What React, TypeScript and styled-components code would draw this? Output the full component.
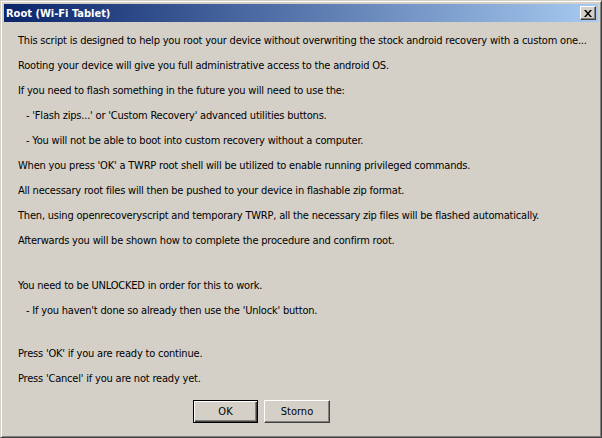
import React, {FC} from 'react';
import styled, {createGlobalStyle} from "styled-components";

const GlobalStyle = createGlobalStyle`
  html, body {
    margin: 0;
    padding: 0;
    background: #d4d0c8;
  }
  * {
    box-sizing: border-box;
  }
`

type Line = {
    text: string
    indent?: boolean
    gapBefore?: number
}

const lines: Line[] = [
    {text: 'This script is designed to help you root your device without overwriting the stock android recovery with a custom one...'},
    {text: 'Rooting your device will give you full administrative access to the android OS.'},
    {text: 'If you need to flash something in the future you will need to use the:'},
    {text: "- 'Flash zips...' or 'Custom Recovery' advanced utilities buttons.", indent: true},
    {text: '- You will not be able to boot into custom recovery without a computer.', indent: true},
    {text: "When you press 'OK' a TWRP root shell will be utilized to enable running privileged commands."},
    {text: 'All necessary root files will then be pushed to your device in flashable zip format.'},
    {text: 'Then, using openrecoveryscript and temporary TWRP, all the necessary zip files will be flashed automatically.'},
    {text: 'Afterwards you will be shown how to complete the procedure and confirm root.'},
    {text: 'You need to be UNLOCKED in order for this to work.', gapBefore: 20},
    {text: "- If you haven't done so already then use the 'Unlock' button.", indent: true},
    {text: "Press 'OK' if you are ready to continue.", gapBefore: 18},
    {text: "Press 'Cancel' if you are not ready yet."},
]

const App: FC = () => {
    return (
        <>
            <GlobalStyle/>
            <Window>
                <TitleBar>
                    <Title>Root (Wi-Fi Tablet)</Title>
                    <CloseButton aria-label="Close">
                        <svg width="8" height="7" viewBox="0 0 8 7">
                            <path d="M0 0h2l2 2.5L6 0h2L5 3.5 8 7H6L4 4.5 2 7H0l3-3.5z" fill="#000"/>
                        </svg>
                    </CloseButton>
                </TitleBar>
                <Body>
                    {lines.map((line, i) => (
                        <TextLine key={i} $indent={line.indent} $gapBefore={line.gapBefore}>
                            {line.text}
                        </TextLine>
                    ))}
                </Body>
                <ButtonRow>
                    <DialogButton $default>OK</DialogButton>
                    <DialogButton>Storno</DialogButton>
                </ButtonRow>
            </Window>
        </>
    );
};

const Window = styled.div`
  width: 602px;
  height: 438px;
  display: flex;
  flex-direction: column;
  padding: 3px;
  background: #d4d0c8;
  border: 1px solid;
  border-color: #d4d0c8 #404040 #404040 #d4d0c8;
  box-shadow: inset 1px 1px #ffffff, inset -1px -1px #808080;
  font-family: Tahoma, "DejaVu Sans", sans-serif;
  font-stretch: condensed;
  font-size: 11px;
  color: #000;
`

const TitleBar = styled.div`
  height: 18px;
  display: flex;
  align-items: center;
  justify-content: space-between;
  padding: 0 2px 0 2px;
  background: linear-gradient(to right, #0a246a, #a6caf0);
`

const Title = styled.span`
  color: #fff;
  font-weight: bold;
  font-size: 11px;
`

const CloseButton = styled.div`
  width: 16px;
  height: 14px;
  display: flex;
  align-items: center;
  justify-content: center;
  background: #d4d0c8;
  border: 1px solid;
  border-color: #ffffff #404040 #404040 #ffffff;
  box-shadow: inset -1px -1px #808080;
  padding-right: 1px;
`

const Body = styled.div`
  padding: 6px 0 0 14px;
  display: flex;
  flex-direction: column;
`

const TextLine = styled.div<{ $indent?: boolean, $gapBefore?: number }>`
  height: 25px;
  line-height: 25px;
  white-space: nowrap;
  letter-spacing: -0.2px;
  padding-left: ${p => p.$indent ? '8px' : '0'};
  margin-top: ${p => p.$gapBefore ?? 0}px;
`

const ButtonRow = styled.div`
  display: flex;
  gap: 6px;
  padding-left: 189px;
  margin-top: auto;
  margin-bottom: 11px;
`

const DialogButton = styled.div<{ $default?: boolean }>`
  width: ${p => p.$default ? '65px' : '66px'};
  height: 23px;
  display: flex;
  align-items: center;
  justify-content: center;
  background: #d4d0c8;
  border: 1px solid;
  border-color: ${p => p.$default ? '#000' : '#ffffff #404040 #404040 #ffffff'};
  box-shadow: ${p => p.$default
    ? 'inset 1px 1px #ffffff, inset -1px -1px #404040, inset -2px -2px #808080'
    : 'inset -1px -1px #808080'};
`

export default App;
